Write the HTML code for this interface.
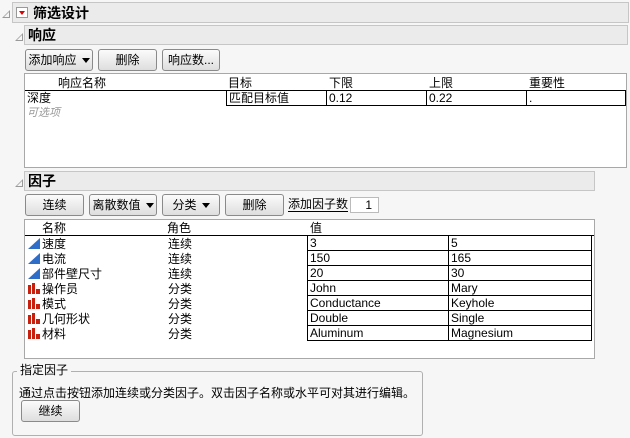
<!DOCTYPE html>
<html><head><meta charset="utf-8"><style>
*{box-sizing:border-box;margin:0;padding:0}
body{width:630px;height:438px;background:#f6f6f6;font-family:"Liberation Sans","Noto Sans CJK SC",sans-serif;font-size:12px;line-height:15px;color:#000;position:relative;overflow:hidden}
.a{position:absolute;line-height:15px}
.hdr{position:absolute;background:#ebebeb;border:1px solid #c6c6c6;font-weight:bold;font-size:14px;line-height:18px}
.hdr .a{line-height:18px}
.tri{position:absolute;width:0;height:0;border-left:8px solid transparent;border-bottom:8px solid #999}
.tri:after{content:"";position:absolute;left:-6px;top:2px;border-left:5px solid transparent;border-bottom:5px solid #f6f6f6}
.btn{position:absolute;height:22px;border:1px solid #8a8a8a;border-radius:3px;background:linear-gradient(#fbfbfb,#dedede);text-align:center;line-height:20px;font-size:12px}
.box{position:absolute;background:#fff;border:1px solid #a8a8a8}
.cell{position:absolute;border:1px solid #000;height:16px;line-height:15px;padding-left:2px;background:#fff}
.dd:after{content:"";display:inline-block;margin-left:5px;vertical-align:middle;border-left:4px solid transparent;border-right:4px solid transparent;border-top:5px solid #000}
.ic{position:absolute;left:28px;width:12px;height:11px}
</style></head><body>
<div class="tri" style="left:2px;top:10px"></div>
<div class="hdr" style="left:12px;top:2px;width:617px;height:21px"><span class="a" style="left:3px;top:4px;width:12px;height:11px;border:1px solid #999;background:#fff"><span class="a" style="left:2px;top:3px;border-left:3px solid transparent;border-right:3px solid transparent;border-top:4px solid #d00"></span></span><span class="a" style="left:20px;top:1px">筛选设计</span></div>
<div class="tri" style="left:15px;top:33px"></div>
<div class="hdr" style="left:24px;top:25px;width:604px;height:20px"><span class="a" style="left:3px;top:0">响应</span></div>
<div class="btn dd" style="left:25px;top:49px;width:68px">添加响应</div>
<div class="btn" style="left:98px;top:49px;width:59px">删除</div>
<div class="btn" style="left:162px;top:49px;width:58px">响应数...</div>
<div class="box" style="left:24px;top:73px;width:603px;height:95px">
<span class="a" style="left:33px;top:2px">响应名称</span><span class="a" style="left:203px;top:2px">目标</span><span class="a" style="left:304px;top:2px">下限</span><span class="a" style="left:404px;top:2px">上限</span><span class="a" style="left:504px;top:2px">重要性</span>
<div class="a" style="left:0;top:16px;width:601px;border-top:1px solid #000"></div>
<span class="a" style="left:2px;top:17px">深度</span>
<span class="a" style="left:2px;top:32px;color:#999;font-style:italic;font-size:11px">可选项</span>
<div class="cell" style="left:201px;top:16px;width:101px">匹配目标值</div>
<div class="cell" style="left:301px;top:16px;width:101px">0.12</div>
<div class="cell" style="left:401px;top:16px;width:101px">0.22</div>
<div class="cell" style="left:501px;top:16px;width:100px">.</div>
</div>
<div class="tri" style="left:15px;top:179px"></div>
<div class="hdr" style="left:24px;top:171px;width:571px;height:20px"><span class="a" style="left:3px;top:0">因子</span></div>
<div class="btn" style="left:25px;top:194px;width:59px">连续</div>
<div class="btn dd" style="left:89px;top:194px;width:68px">离散数值</div>
<div class="btn dd" style="left:162px;top:194px;width:58px">分类</div>
<div class="btn" style="left:225px;top:194px;width:59px">删除</div>
<span class="a" style="left:288px;top:197px;border-bottom:1px solid #000;line-height:14px">添加因子数</span>
<div class="a" style="left:350px;top:197px;width:29px;height:16px;background:#fff;border:1px solid #bbb;text-align:right;padding-right:6px;line-height:14px">1</div>
<div class="box" style="left:24px;top:219px;width:571px;height:140px">
<span class="a" style="left:17px;top:1px">名称</span><span class="a" style="left:142px;top:1px">角色</span><span class="a" style="left:285px;top:1px">值</span>
<div class="a" style="left:0;top:15px;width:569px;border-top:1px solid #000"></div>
</div>
<div id="rows"></div>
<script>
var d=[["速度","连续","3","5",0],["电流","连续","150","165",0],["部件壁尺寸","连续","20","30",0],["操作员","分类","John","Mary",1],["模式","分类","Conductance","Keyhole",1],["几何形状","分类","Double","Single",1],["材料","分类","Aluminum","Magnesium",1]];
var h="";d.forEach(function(r,i){var y=235+i*15;
h+=r[4]?'<svg class="ic" style="top:'+(y+3)+'px" viewBox="0 0 12 11"><rect x="0" y="2" width="3" height="9" fill="#c8200e"/><rect x="4" y="0" width="3" height="11" fill="#c8200e"/><rect x="8" y="6" width="4" height="5" fill="#c8200e"/></svg>':'<svg class="ic" style="top:'+(y+3)+'px" viewBox="0 0 12 11"><polygon points="0,11 12,0 12,11" fill="#2f6ec8"/></svg>';
h+='<span class="a" style="left:42px;top:'+(y+2)+'px">'+r[0]+'</span><span class="a" style="left:168px;top:'+(y+2)+'px">'+r[1]+'</span>';
h+='<div class="cell" style="left:307px;top:'+y+'px;width:142px">'+r[2]+'</div><div class="cell" style="left:448px;top:'+y+'px;width:144px">'+r[3]+'</div>';});
document.getElementById("rows").innerHTML=h;
</script>
<div class="a" style="left:12px;top:371px;width:411px;height:65px;border:1px solid #b0b0b0;border-radius:3px"></div>
<span class="a" style="left:17px;top:363px;background:#f6f6f6;padding:0 3px">指定因子</span>
<span class="a" style="left:19px;top:386px">通过点击按钮添加连续或分类因子。双击因子名称或水平可对其进行编辑。</span>
<div class="btn" style="left:21px;top:400px;width:59px">继续</div>
</body></html>
